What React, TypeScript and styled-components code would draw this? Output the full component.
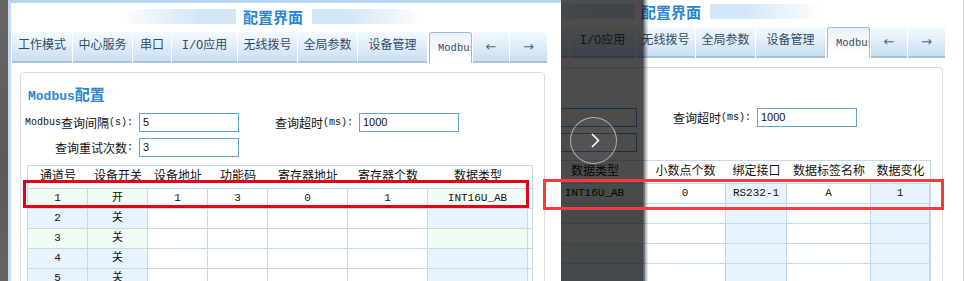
import React from 'react'
import styled, { createGlobalStyle } from 'styled-components'

const CJK = `"Noto Sans CJK SC", "Noto Sans", sans-serif`
const SONG = `"Liberation Mono", "Noto Sans CJK SC", monospace`
const GRID = '#c3daee'
const GREEN = '#f2fcf2'
const BLUE = '#e7f3fd'

const GlobalStyle = createGlobalStyle`
    html, body {
        margin: 0;
        padding: 0;
        background: #fff;
    }
    body {
        font-family: ${CJK};
    }
`

type Tint = 'alt' | 'blue'
type Column = { title: string; w: number; tint?: Tint }
type Row = { tone: 'green' | 'blue'; cells: string[] }

const columns: Column[] = [
    { title: '通道号', w: 60, tint: 'alt' },
    { title: '设备开关', w: 60, tint: 'alt' },
    { title: '设备地址', w: 60 },
    { title: '功能码', w: 60 },
    { title: '寄存器地址', w: 80 },
    { title: '寄存器个数', w: 80 },
    { title: '数据类型', w: 100, tint: 'alt' },
    { title: '小数点个数', w: 81 },
    { title: '绑定接口', w: 61, tint: 'blue' },
    { title: '数据标签名称', w: 84 },
    { title: '数据变化', w: 59, tint: 'blue' },
]

const rows: Row[] = [
    { tone: 'green', cells: ['1', '开', '1', '3', '0', '1', 'INT16U_AB', '0', 'RS232-1', 'A', '1'] },
    { tone: 'blue', cells: ['2', '关'] },
    { tone: 'green', cells: ['3', '关'] },
    { tone: 'blue', cells: ['4', '关'] },
    { tone: 'blue', cells: ['5', '关'] },
    { tone: 'blue', cells: ['6', '关'] },
]

const tabs = [
    { label: '工作模式', w: 60 },
    { label: '中心服务', w: 59 },
    { label: '串口', w: 38 },
    { label: 'I/O应用', w: 65 },
    { label: '无线拨号', w: 59 },
    { label: '全局参数', w: 59 },
    { label: '设备管理', w: 69 },
]

const Stage = styled.div`
    position: relative;
    display: flex;
    width: 965px;
    height: 281px;
    overflow: hidden;
    background: #fff;
`

const SideStrip = styled.div`
    flex: 0 0 8px;
    background: linear-gradient(to bottom, #666 0%, #5a5a5a 60%, #646464 100%);
`

const Frame = styled.div<{ $w: number }>`
    position: relative;
    flex: 0 0 ${(p) => p.$w}px;
    height: 100%;
    overflow: hidden;
`

const Scrolled = styled.div<{ $dx: number; $dy: number }>`
    margin-left: ${(p) => -p.$dx}px;
    margin-top: ${(p) => -p.$dy}px;
`

const Window = styled.div`
    box-sizing: border-box;
    width: 558px;
    height: 300px;
    background: #fff;
    border-left: 3px solid #c4dbef;
    border-top: 3px solid #b7d5f0;
    border-right: 1px solid #c8d8e8;
`

const TitleBar = styled.div`
    display: flex;
    align-items: center;
    height: 27px;
    padding-left: 107px;
`

const TitleFade = styled.div<{ $dir: 'in' | 'out'; $w: number }>`
    width: ${(p) => p.$w}px;
    height: 15px;
    background: linear-gradient(
        to ${(p) => (p.$dir === 'in' ? 'right' : 'left')},
        #fff 0%,
        #d3e6f6 70%,
        #d3e6f6 100%
    );
`

const Title = styled.div`
    margin: 0 9px 0 7px;
    font-family: ${CJK};
    font-size: 15px;
    font-weight: 700;
    line-height: 18px;
    color: #2a86d2;
    white-space: nowrap;
`

const TabStrip = styled.div`
    display: flex;
    align-items: flex-end;
    gap: 1px;
    height: 31px;
    margin-top: 2px;
    padding-left: 1px;
`

const Tab = styled.div<{ $w: number }>`
    box-sizing: border-box;
    flex: 0 0 ${(p) => p.$w}px;
    height: 31px;
    border-bottom: 2px solid #a4c3dc;
    background: linear-gradient(to bottom, #f4f9fe 0%, #e2eef9 45%, #c9def0 100%);
    font-family: ${SONG};
    font-size: 12px;
    line-height: 29px;
    text-align: center;
    color: #2f4d67;
    white-space: nowrap;
`

const ActiveTab = styled.div<{ $w: number }>`
    box-sizing: border-box;
    flex: 0 0 ${(p) => p.$w}px;
    height: 31px;
    margin-left: 1px;
    padding-left: 8px;
    overflow: hidden;
    border: 1px solid #9dbcd5;
    border-bottom: none;
    border-radius: 3px 3px 0 0;
    background: linear-gradient(to bottom, #e9f1f8 0%, #fff 85%);
    font-family: ${SONG};
    font-size: 10.5px;
    line-height: 30px;
    color: #2f4d67;
    white-space: nowrap;
`

const ArrowTab = styled(Tab)`
    font-family: 'DejaVu Sans', sans-serif;
    font-size: 13px;
    color: #4f687c;
`

const Panel = styled.div`
    box-sizing: border-box;
    width: 525px;
    height: 240px;
    margin: 9px 0 0 9px;
    padding-top: 12px;
    border: 1px solid #dcdcdc;
    border-radius: 4px;
`

const Heading = styled.div`
    margin-left: 7px;
    font-family: ${CJK};
    font-size: 15px;
    font-weight: 700;
    line-height: 18px;
    color: #2a86d2;
`

const HeadLatin = styled.span`
    font-family: 'Liberation Mono', monospace;
    font-size: 13px;
`

const Form = styled.div`
    display: grid;
    grid-template-columns: 112px 100px 108px 100px;
    grid-auto-rows: 19px;
    column-gap: 6px;
    row-gap: 6px;
    margin-top: 7px;
`

const FieldLabel = styled.div`
    display: flex;
    align-items: center;
    justify-content: flex-end;
    font-family: ${CJK};
    font-size: 12px;
    color: #111;
    white-space: nowrap;
`

const Latin = styled.span`
    font-family: 'Liberation Mono', monospace;
    font-size: 10px;
`

const Field = styled.div`
    box-sizing: border-box;
    height: 19px;
    padding-left: 3px;
    border: 1px solid #5ea3d8;
    background: #fff;
    font-family: 'Liberation Sans', sans-serif;
    font-size: 11px;
    line-height: 17px;
    color: #111;
`

const TableView = styled.div`
    width: 504px;
    margin: 8px 0 0 6px;
    overflow: hidden;
    border: 1px solid ${GRID};
    border-bottom: none;
`

const Track = styled.div<{ $scroll: number; $w: number }>`
    width: ${(p) => p.$w}px;
    margin-left: ${(p) => -p.$scroll}px;
`

const HeadRow = styled.div`
    display: flex;
    height: 22px;
`

const HeadCell = styled.div<{ $w: number }>`
    flex: 0 0 ${(p) => p.$w}px;
    font-family: ${CJK};
    font-size: 12px;
    line-height: 18px;
    text-align: center;
    color: #111;
    white-space: nowrap;
`

const DataRow = styled.div`
    box-sizing: border-box;
    display: flex;
    height: 20px;
    border-top: 1px solid ${GRID};
`

const Cell = styled.div<{ $w: number; $bg: string }>`
    box-sizing: border-box;
    flex: 0 0 ${(p) => p.$w}px;
    border-right: 1px solid ${GRID};
    background: ${(p) => p.$bg};
    font-family: ${SONG};
    font-size: 11px;
    line-height: 19px;
    text-align: center;
    color: #111;
    white-space: nowrap;
`

const Dimmer = styled.div`
    position: absolute;
    top: 0;
    left: 0;
    width: 87px;
    height: 100%;
    background: linear-gradient(
        to right,
        rgba(0, 0, 0, 0.7) 0%,
        rgba(0, 0, 0, 0.7) 94%,
        rgba(0, 0, 0, 0.3) 97%,
        rgba(0, 0, 0, 0.05) 100%
    );
`

const NextButton = styled.div`
    position: absolute;
    left: 9px;
    top: 117px;
    box-sizing: border-box;
    width: 47px;
    height: 47px;
    display: flex;
    align-items: center;
    justify-content: center;
    padding-left: 3px;
    border: 1.5px solid rgba(255, 255, 255, 0.55);
    border-radius: 50%;
    background: rgba(255, 255, 255, 0.04);
`

const Callout = styled.div<{ $x: number; $y: number; $w: number; $h: number; $c: string }>`
    position: absolute;
    left: ${(p) => p.$x}px;
    top: ${(p) => p.$y}px;
    box-sizing: border-box;
    width: ${(p) => p.$w}px;
    height: ${(p) => p.$h}px;
    border: 3px solid ${(p) => p.$c};
    pointer-events: none;
`

function cellBg(col: Column, row: Row) {
    if (col.tint === 'blue') return BLUE
    if (col.tint === 'alt') return row.tone === 'green' ? GREEN : BLUE
    return '#fff'
}

function ConfigWindow({ scroll }: { scroll: number }) {
    const total = columns.reduce((s, c) => s + c.w, 0)
    return (
        <Window>
            <TitleBar>
                <TitleFade $dir="in" $w={118} />
                <Title>配置界面</Title>
                <TitleFade $dir="out" $w={113} />
            </TitleBar>
            <TabStrip>
                {tabs.map((t) => (
                    <Tab key={t.label} $w={t.w}>
                        {t.label}
                    </Tab>
                ))}
                <ActiveTab $w={43}>Modbus</ActiveTab>
                <ArrowTab $w={36}>←</ArrowTab>
                <ArrowTab $w={37}>→</ArrowTab>
            </TabStrip>
            <Panel>
                <Heading>
                    <HeadLatin>Modbus</HeadLatin>配置
                </Heading>
                <Form>
                    <FieldLabel>
                        <Latin>Modbus</Latin>查询间隔<Latin>(s):</Latin>
                    </FieldLabel>
                    <Field>5</Field>
                    <FieldLabel>
                        查询超时<Latin>(ms):</Latin>
                    </FieldLabel>
                    <Field>1000</Field>
                    <FieldLabel>
                        查询重试次数<Latin>:</Latin>
                    </FieldLabel>
                    <Field>3</Field>
                </Form>
                <TableView>
                    <Track $scroll={scroll} $w={total}>
                        <HeadRow>
                            {columns.map((c) => (
                                <HeadCell key={c.title} $w={c.w}>
                                    {c.title}
                                </HeadCell>
                            ))}
                        </HeadRow>
                        {rows.map((r, i) => (
                            <DataRow key={i}>
                                {columns.map((c, j) => (
                                    <Cell key={c.title} $w={c.w} $bg={cellBg(c, r)}>
                                        {r.cells[j] ?? ''}
                                    </Cell>
                                ))}
                            </DataRow>
                        ))}
                    </Track>
                </TableView>
            </Panel>
        </Window>
    )
}

export default function App() {
    return (
        <>
            <GlobalStyle />
            <Stage>
                <SideStrip />
                <Frame $w={553}>
                    <ConfigWindow scroll={0} />
                </Frame>
                <Frame $w={404}>
                    <Scrolled $dx={155} $dy={5}>
                        <ConfigWindow scroll={281} />
                    </Scrolled>
                    <Dimmer>
                        <NextButton>
                            <svg width="9" height="15" viewBox="0 0 9 15">
                                <polyline
                                    points="1,1 7.5,7.5 1,14"
                                    fill="none"
                                    stroke="#fff"
                                    strokeWidth="1.6"
                                />
                            </svg>
                        </NextButton>
                    </Dimmer>
                </Frame>
                <Callout $x={23} $y={180} $w={506} $h={28} $c="#e3001b" />
                <Callout $x={543} $y={179} $w={401} $h={31} $c="#f43a3a" />
            </Stage>
        </>
    )
}
